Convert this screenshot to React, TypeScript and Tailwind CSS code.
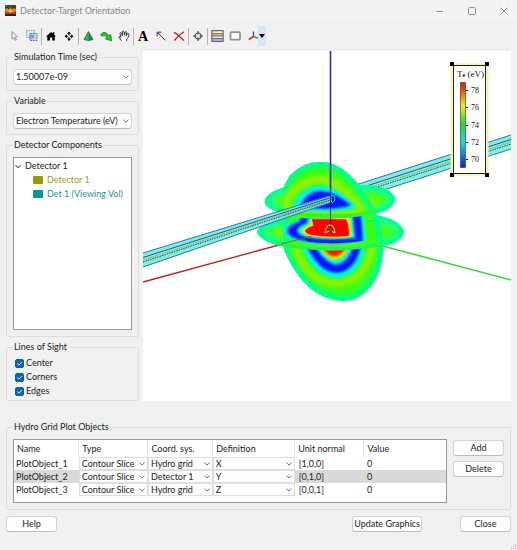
import React from 'react';

interface PlotObject {
  name: string;
  type: string;
  coord: string;
  definition: string;
  normal: string;
  value: string;
}

const plotObjects: PlotObject[] = [
  { name: 'PlotObject_1', type: 'Contour Slice', coord: 'Hydro grid', definition: 'X', normal: '[1,0,0]', value: '0' },
  { name: 'PlotObject_2', type: 'Contour Slice', coord: 'Detector 1', definition: 'Y', normal: '[0,1,0]', value: '0' },
  { name: 'PlotObject_3', type: 'Contour Slice', coord: 'Hydro grid', definition: 'Z', normal: '[0,0,1]', value: '0' },
];

function Chevron() {
  return (
    <svg className="pointer-events-none absolute top-1/2 right-[3px] h-1 w-[6px] -translate-y-1/2" viewBox="0 0 6 4" fill="none">
      <path d="M0.5 0.6 L3 3.1 L5.5 0.6" stroke="#606060" strokeWidth="0.9" />
    </svg>
  );
}

function Combo({ label, options }: { label: string; options: string[] }) {
  return (
    <div className="relative">
      <select
        aria-label={label}
        className="block h-4 w-full appearance-none rounded-sm border border-[#d4d4d4] border-b-[#bdbdbd] bg-[#fdfdfd] pr-3 pl-[2px] leading-3"
      >
        {options.map((option) => (
          <option key={option}>{option}</option>
        ))}
      </select>
      <Chevron />
    </div>
  );
}

function CellSelect({ label, value }: { label: string; value: string }) {
  return (
    <div className="relative">
      <select
        aria-label={label}
        defaultValue={value}
        className="block h-[13px] w-full appearance-none border border-[#dedede] bg-[#fdfdfd] pr-2 pl-[2px] leading-[11px]"
      >
        <option>{value}</option>
      </select>
      <Chevron />
    </div>
  );
}

function Group({ title, className = '', children }: { title: string; className?: string; children: React.ReactNode }) {
  return (
    <fieldset className={`min-w-0 rounded-[2px] border border-[#dcdcdc] px-[6px] ${className}`}>
      <legend className="h-3 px-px leading-3">{title}</legend>
      {children}
    </fieldset>
  );
}

function Check({ label }: { label: string }) {
  return (
    <label className="flex h-[14px] items-center gap-[2px]">
      <span className="relative flex">
        <input
          type="checkbox"
          defaultChecked
          className="peer h-[9px] w-[9px] appearance-none rounded-[2px] border border-[#0a5ca8] bg-white checked:bg-[#0f64b4]"
        />
        <svg className="pointer-events-none absolute inset-0 hidden h-[9px] w-[9px] peer-checked:block" viewBox="0 0 9 9" fill="none">
          <path d="M2.3 4.6 L3.9 6.1 L6.8 3.1" stroke="#fff" strokeWidth="0.9" />
        </svg>
      </span>
      {label}
    </label>
  );
}

function PushButton({ className, children }: { className: string; children: React.ReactNode }) {
  return (
    <button
      type="button"
      className={`h-4 rounded-[3px] border border-[#d2d2d2] border-b-[#bcbcbc] bg-[#fdfdfd] text-center leading-3 whitespace-nowrap ${className}`}
    >
      {children}
    </button>
  );
}

function Tool({ label, children }: { label: string; children: React.ReactNode }) {
  return (
    <button type="button" aria-label={label} className="flex h-5 w-[18px] shrink-0 items-center justify-center">
      <svg className="h-[14px] w-[14px]" viewBox="0 0 14 14" fill="none">
        {children}
      </svg>
    </button>
  );
}

function Separator() {
  return <div className="h-[17px] w-px shrink-0 bg-[#b4b4b4]" />;
}

function TitleBar() {
  return (
    <header className="flex h-[21px] items-center bg-[#f3f3f3] pl-[5px] text-[#858585]">
      <svg className="h-[11px] w-[11px]" viewBox="0 0 11 11">
        <rect width="11" height="11" fill="#1d2b2a" />
        <path d="M0 0 H11 V3 L9 2 L7 4 L5.5 2 L4 4 L2 2 L0 3 Z" fill="#3c4a2a" />
        <path d="M0 4 L2 3 L4 4.5 L5.5 2 L7 4.5 L9 3 L11 4 V8 H0 Z" fill="#e8811c" />
        <path d="M3.5 6 L5.5 3.5 L7.5 6 L7 8 H4 Z" fill="#f2d31c" />
        <path d="M0 6 L2 7.5 L4 7 L5.5 8.2 L7 7 L9 7.5 L11 6 V9 H0 Z" fill="#c42a12" />
        <path d="M0 0 H3 L1.5 2 L0 3 Z" fill="#1c7a72" />
      </svg>
      <h1 className="pl-1">Detector-Target Orientation</h1>
      <div className="ml-auto flex items-center gap-6 pr-[9px]">
        <button type="button" aria-label="Minimize" className="flex">
          <svg className="h-2 w-2" viewBox="0 0 8 8"><path d="M0.5 4.5 H7" stroke="#8c8c8c" /></svg>
        </button>
        <button type="button" aria-label="Maximize" className="flex">
          <svg className="h-2 w-2" viewBox="0 0 8 8"><rect x="0.5" y="0.5" width="7" height="7" rx="1" fill="none" stroke="#8c8c8c" /></svg>
        </button>
        <button type="button" aria-label="Close window" className="flex">
          <svg className="h-2 w-2" viewBox="0 0 8 8"><path d="M0.7 0.7 L7.3 7.3 M7.3 0.7 L0.7 7.3" stroke="#8c8c8c" /></svg>
        </button>
      </div>
    </header>
  );
}

function Toolbar() {
  return (
    <div className="flex h-[30px] items-center pl-[5px]">
      <Tool label="Select">
        <path d="M5 2.5 V10 L6.8 8.5 L8 11.3 L9.3 10.7 L8.1 8 L10.3 7.8 Z" fill="#f7f7f7" stroke="#777" strokeWidth="0.8" />
      </Tool>
      <Tool label="Rubber band">
        <rect x="1.5" y="1.5" width="8" height="7" fill="#dbe7f3" stroke="#8ba3bb" strokeDasharray="1.5 0.7" />
        <rect x="5" y="4.5" width="7" height="7" fill="#c7d9ec" stroke="#5f7f9f" strokeDasharray="2 0.7" />
        <path d="M4 5.5 H9 V9.5 H4 Z" fill="#7ca0c7" />
      </Tool>
      <Separator />
      <Tool label="Home">
        <path d="M2 7.5 L7 3 L8.8 4.6 V3.3 H10.3 V6 L12 7.5 H10.8 V11.5 H8.2 V8.5 H6 V11.5 H3.3 V7.5 Z" fill="#000" />
      </Tool>
      <Tool label="Pan">
        <path d="M7 3 V11.5 M3 7.2 H11" stroke="#111" strokeWidth="1.1" />
        <path d="M7 2.5 L5 5 H9 Z M7 12 L5 9.5 H9 Z M2.5 7.2 L5 5.2 V9.2 Z M11.5 7.2 L9 5.2 V9.2 Z" fill="#111" />
        <rect x="6.1" y="6.3" width="1.8" height="1.8" fill="#f0f0f0" />
      </Tool>
      <Separator />
      <Tool label="Cone">
        <path d="M7.5 2.5 L12 10.5 Q8 12.6 3 10.5 Z" fill="#238045" />
        <path d="M7.5 2.5 L7.8 11.6 Q5 11.8 3 10.5 Z" fill="#49a566" />
        <path d="M7.5 2.5 L12 10.5 Q8 12.6 3 10.5 Z" stroke="#1c5c34" strokeWidth="0.6" />
      </Tool>
      <Tool label="Rotate">
        <path d="M1.5 6 Q3.5 2.7 6.3 3.5 Q8.8 4.4 9.4 6.7 L11.8 5.6 L12.5 11.8 L6.5 10 L8 8.2 Q6 5.6 3.5 7.2 Z" fill="#27c52d" stroke="#147b1b" strokeWidth="0.8" />
      </Tool>
      <Tool label="Hand">
        <path d="M4.3 11.8 Q3.8 10.2 1.8 8 Q2.3 6.7 4.1 8.2 L2.9 4.2 Q3.6 3 4.5 4.3 L5.5 6.7 L5.3 2.7 Q6.3 1.4 7 2.8 L7.4 6.3 L8.2 2.9 Q9.2 2 9.7 3.3 L9.2 6.8 L10.7 4.6 Q11.9 4.1 12 5.4 Q11.4 8.9 9.6 10.4 V12" fill="#fff" stroke="#222" strokeWidth="0.9" />
      </Tool>
      <Separator />
      <button type="button" aria-label="Annotate text" className="flex h-5 w-[18px] items-center justify-center pt-px font-['Liberation_Serif',serif] text-[14px] leading-4 font-bold text-black">
        A
      </button>
      <Tool label="Annotate arrow">
        <path d="M3.7 3.7 L11.3 11.3 M3.2 7.3 V3.2 H7.3" stroke="#333" />
      </Tool>
      <Tool label="Remove annotation">
        <path d="M2 3.3 Q6 5.4 11.8 11.5 M12 2.8 Q7 5.5 2.5 11.5" stroke="#9c2630" strokeWidth="1.3" />
      </Tool>
      <Separator />
      <Tool label="Center">
        <circle cx="7" cy="7" r="3" stroke="#555" strokeWidth="1.2" />
        <path d="M7 2 V5.5 M7 8.5 V12 M2 7 H5.5 M8.5 7 H12" stroke="#444" strokeWidth="1.2" />
      </Tool>
      <Separator />
      <Tool label="Color legend">
        <rect x="2" y="1.8" width="11" height="10.4" fill="#fff" stroke="#222" />
        <rect x="2.5" y="2.5" width="10" height="2.2" fill="#f6eda6" />
        <rect x="2.5" y="5" width="10" height="2" fill="#f0b5b0" />
        <rect x="2.5" y="7.2" width="10" height="2.2" fill="#f7f3f9" />
        <rect x="2.5" y="9.5" width="10" height="2.2" fill="#9fb0e4" />
        <path d="M2 4.7 H13 M2 7 H13 M2 9.4 H13" stroke="#333" strokeWidth="0.7" />
      </Tool>
      <Tool label="Outline">
        <rect x="2.5" y="3.2" width="9.5" height="7.5" rx="1" fill="#fff" stroke="#929292" strokeWidth="1.8" />
      </Tool>
      <div className="flex">
        <Tool label="Axes">
          <path d="M7.5 7.5 V2.5" stroke="#2440e8" strokeWidth="1.3" />
          <path d="M7.5 7.5 L2.8 10.5" stroke="#e02a2a" strokeWidth="1.6" />
          <path d="M7.5 7.5 L12 9.3" stroke="#13b03c" strokeWidth="1.6" />
        </Tool>
        <button type="button" aria-label="Axes menu" className="-ml-1 flex h-5 w-2 items-center justify-center bg-[#d5e6f5]">
          <svg className="h-1 w-[6px]" viewBox="0 0 6 4"><path d="M0 0 H6 L3 4 Z" fill="#000" /></svg>
        </button>
      </div>
    </div>
  );
}

const DISC =
  'M130 112 L150 75 Q190 35 240 35 Q290 35 330 75 Q370 115 400 170 Q430 230 430 290 Q428 360 400 400 Q365 452 310 453 Q255 452 210 415 Q160 370 130 295 Z';
const UPPER_RING = 'M73 155 Q78 128 130 112 L370 104 Q458 108 466 147 Q462 180 405 192 Q345 206 290 206 Q180 206 110 185 Q75 172 73 155 Z';
const LOWER_RING = 'M50 245 Q58 222 120 208 L410 195 Q480 208 493 245 Q486 278 430 288 Q350 302 270 302 Q180 300 115 286 Q60 272 50 245 Z';

const legendTicks = [
  { label: '78', y: 90 },
  { label: '76', y: 107 },
  { label: '74', y: 125 },
  { label: '72', y: 142 },
  { label: '70', y: 159 },
];

// One viewing volume with its lines of sight, offset below the top edge
function Beam({ x1, y1, x2, y2, taper = 14 }: { x1: number; y1: number; x2: number; y2: number; taper?: number }) {
  const k = taper / 14;
  return (
    <g>
      <path d={`M${x1} ${y1} L${x2} ${y2} L${x2} ${y2 + taper} L${x1} ${y1 + 14} Z`} fill="#6cf0d4" fillOpacity="0.88" />
      <g strokeWidth="1">
        <path d={`M${x1} ${y1} L${x2} ${y2}`} stroke="#2f6fc0" />
        <path d={`M${x1} ${y1 + 4.5} L${x2} ${y2 + 4.5 * k}`} stroke="#1a5aa0" />
        <path d={`M${x1} ${y1 + 7} L${x2} ${y2 + 7 * k}`} stroke="#b8a890" />
        <path d={`M${x1} ${y1 + 9} L${x2} ${y2 + 9 * k}`} stroke="#1c4a50" strokeDasharray="1.5 1" />
        <path d={`M${x1} ${y1 + 14} L${x2} ${y2 + taper}`} stroke="#2f6fc0" />
      </g>
    </g>
  );
}

function Viewport() {
  return (
    <svg className="block h-full min-h-[350px] w-full bg-white" viewBox="143 51 368 350" role="img" aria-label="Detector and target scene">
      <defs>
        <clipPath id="disc"><path d={DISC} /></clipPath>
        <clipPath id="top"><rect x="0" y="0" width="540" height="206" /></clipPath>
        <clipPath id="mid"><path d="M0 200 L180 205 Q290 210 420 192 L540 180 V285 L430 288 Q290 306 130 290 L0 280 Z" /></clipPath>
        <clipPath id="low"><rect x="0" y="290" width="540" height="200" /></clipPath>
        <clipPath id="upperRing"><path d={UPPER_RING} /></clipPath>
        <clipPath id="lowerRing"><path d={LOWER_RING} /></clipPath>
        <filter id="soft" x="-20%" y="-20%" width="140%" height="140%"><feGaussianBlur stdDeviation="7" /></filter>
        <filter id="fine" x="-20%" y="-20%" width="140%" height="140%"><feGaussianBlur stdDeviation="2.5" /></filter>
        <linearGradient id="scale" x1="0" y1="0" x2="0" y2="1">
          <stop offset="0" stopColor="#d81c0c" />
          <stop offset="0.12" stopColor="#ff5a00" />
          <stop offset="0.27" stopColor="#f4ee10" />
          <stop offset="0.48" stopColor="#22e020" />
          <stop offset="0.7" stopColor="#18dce0" />
          <stop offset="0.88" stopColor="#1468ee" />
          <stop offset="1" stopColor="#1420c8" />
        </linearGradient>
      </defs>

      <path d="M143 282 L312 236" stroke="#c01c1c" strokeWidth="1.3" />
      <path d="M375 244 L511 280" stroke="#30d830" strokeWidth="1.5" />
      <Beam x1={340} y1={190} x2={511} y2={135} />

      <g transform="translate(240 150) scale(0.33333)">
        <g clipPath="url(#upperRing)">
          <path d={UPPER_RING} fill="#3cff14" stroke="#00ff96" strokeWidth="36" filter="url(#soft)" />
          <ellipse cx="270" cy="155" rx="150" ry="22" fill="#84f400" filter="url(#soft)" />
        </g>
        <g clipPath="url(#lowerRing)">
          <path d={LOWER_RING} fill="#3cff14" stroke="#00ff96" strokeWidth="36" filter="url(#soft)" />
          <ellipse cx="270" cy="247" rx="165" ry="24" fill="#84f400" filter="url(#soft)" />
        </g>

        <g clipPath="url(#disc)">
          <path d={DISC} fill="#38ff14" />
          <path d={DISC} fill="none" stroke="#00ff8c" strokeWidth="34" filter="url(#soft)" />
          <g clipPath="url(#top)">
            <path d="M130 160 Q170 95 240 88 Q300 95 360 175 L340 190 L150 180 Z" fill="none" stroke="#94f000" strokeWidth="24" filter="url(#soft)" />
            <path d="M160 165 Q182 110 240 107 Q298 112 352 173 Q270 195 162 180 Z" fill="#00f5e8" filter="url(#fine)" />
            <path d="M184 160 Q202 125 240 122 Q285 124 333 166 Q270 184 192 170 Z" fill="#0018ff" filter="url(#fine)" />
          </g>
          <g clipPath="url(#low)">
            <path d="M160 280 Q200 405 300 400 Q385 385 398 280" fill="none" stroke="#94f000" strokeWidth="20" filter="url(#soft)" />
            <path d="M184 285 Q220 382 292 384 Q364 376 378 285 Z" fill="#00f5e8" filter="url(#fine)" />
            <path d="M198 285 Q238 368 290 368 Q344 366 364 285 Z" fill="#0018ff" filter="url(#fine)" />
            <path d="M222 285 Q258 344 290 344 Q324 340 342 285 Z" fill="#00f5e8" filter="url(#fine)" />
            <path d="M232 285 Q260 331 285 331 Q318 328 330 285 Z" fill="#c8f000" filter="url(#fine)" />
            <path d="M244 285 Q262 319 284 319 Q308 317 320 285 Z" fill="#ff1800" filter="url(#fine)" />
          </g>
        </g>

        <g clipPath="url(#mid)">
          <path d="M128 240 Q135 222 170 212 L174 195 H372 L378 274 Q280 294 185 276 Q130 266 128 240 Z" fill="#00f5e8" filter="url(#fine)" />
          <path d="M140 240 Q148 223 180 215 L182 190 H362 L368 270 Q280 287 195 272 Q146 264 140 240 Z" fill="#0018ff" filter="url(#fine)" />
          <path d="M170 242 Q175 226 200 220 L206 190 H338 L346 264 Q270 272 210 263 Q175 258 170 242 Z" fill="#00f5e8" filter="url(#fine)" />
          <path d="M184 243 Q190 229 210 224 L214 190 H330 L336 260 Q270 267 215 259 Q188 256 184 243 Z" fill="#ffe400" filter="url(#fine)" />
          <path d="M195 243 Q200 232 220 228 L216 208 H318 Q327 225 327 257 Q270 264 222 256 Q200 254 195 243 Z" fill="#ff0000" />
          <path d="M200 271 Q280 284 368 270" fill="none" stroke="#101cc0" strokeWidth="5" />
        </g>

        {/* front edges of the two horizontal slices */}
        <g fill="none">
          <path d="M110 181 Q200 198 290 198 Q350 198 410 182" stroke="#2cf52a" strokeWidth="12" />
          <path d="M150 183 Q230 190 290 190 Q340 189 370 182" stroke="#8cf200" strokeWidth="5" filter="url(#fine)" />
          <path d="M110 280 Q200 296 275 296 Q350 295 428 283" stroke="#1ef54c" strokeWidth="12" />
          <path d="M170 285 Q280 294 380 283" stroke="#78f400" strokeWidth="5" filter="url(#fine)" />
        </g>
      </g>

      <Beam x1={143} y1={253} x2={332} y2={195} taper={7} />
      <path d="M331 195 L334 196 L335 200 L332 203" fill="none" stroke="#43cfe0" strokeWidth="1" />
      <path d="M281 244 L312 236" stroke="#7d6414" strokeWidth="0.9" />

      <path d="M330.5 51 V197" stroke="#2222b4" strokeWidth="1.5" />
      <path d="M330.5 197 V231" stroke="#202070" strokeWidth="0.8" />
      <path d="M325 233 Q326 225 330 225 Q334 225 335 233 M325 233 L329 231 M331 231 L335 233" fill="none" stroke="#e6e04a" strokeWidth="1.1" />
      <rect x="329" y="228" width="3" height="4" fill="#7b3a28" />

      <rect x="451.5" y="64.5" width="36" height="110" fill="#fff" stroke="#f3f0a4" strokeWidth="2" />
      <rect x="453.5" y="65.5" width="32" height="108" fill="#fff" stroke="#222" />
      <g fill="#000">
        <rect x="450" y="62" width="4" height="4" />
        <rect x="485" y="62" width="4" height="4" />
        <rect x="450" y="173" width="4" height="4" />
        <rect x="485" y="173" width="4" height="4" />
      </g>
      <g className="font-['Liberation_Serif',serif]" fill="#111">
        <text x="457" y="77" fontSize="9">T<tspan fontSize="6" fontWeight="bold">e</tspan> (eV)</text>
        {legendTicks.map((tick) => (
          <g key={tick.label}>
            <path d={`M466 ${tick.y + 0.5} h2`} stroke="#222" />
            <text x="471" y={tick.y + 3} fontSize="8">{tick.label}</text>
          </g>
        ))}
      </g>
      <rect x="460.5" y="82.5" width="5" height="85" fill="url(#scale)" stroke="#333" strokeWidth="0.6" />
    </svg>
  );
}

function SidePanel() {
  return (
    <aside className="flex w-[133px] shrink-0 flex-col gap-1">
      <Group title="Simulation Time (sec)" className="pt-[6px] pb-[5px]">
        <Combo label="Simulation Time (sec)" options={['1.50007e-09']} />
      </Group>
      <Group title="Variable" className="pt-[6px] pb-[5px]">
        <Combo label="Variable" options={['Electron Temperature (eV)']} />
      </Group>
      <Group title="Detector Components" className="grow pt-[6px] pb-[6px]">
        <ul className="h-full min-h-[171px] border border-[#999] bg-white pt-px leading-[14px]">
          <li>
            <div className="flex items-center gap-1 pl-px">
              <svg className="h-[5px] w-[6px]" viewBox="0 0 6 5" fill="none">
                <path d="M0.5 1 L3 3.8 L5.5 1" stroke="#222" />
              </svg>
              Detector 1
            </div>
            <ul className="pl-[19px]">
              <li className="flex items-center gap-1 text-[#a09a20]">
                <span className="h-2 w-[10px] rounded-[1px] bg-[#999900]" />
                Detector 1
              </li>
              <li className="flex items-center gap-1 text-[#1c9494]">
                <span className="h-2 w-[10px] rounded-[1px] bg-[#009999]" />
                Det 1 (Viewing Vol)
              </li>
            </ul>
          </li>
        </ul>
      </Group>
      <Group title="Lines of Sight" className="pt-[3px] pb-[2px]">
        <div className="pl-[2px]">
          <Check label="Center" />
          <Check label="Corners" />
          <Check label="Edges" />
        </div>
      </Group>
    </aside>
  );
}

function PlotTable() {
  const headings = ['Name', 'Type', 'Coord. sys.', 'Definition', 'Unit normal', 'Value'];
  return (
    <div className="h-16 min-w-0 grow border border-[#999] bg-white">
      <table className="w-full table-fixed border-collapse text-left">
        <colgroup>
          <col className="w-[15%]" />
          <col className="w-[16%]" />
          <col className="w-[15%]" />
          <col className="w-[19%]" />
          <col className="w-[16%]" />
          <col className="w-[19%]" />
        </colgroup>
        <thead>
          <tr className="h-[17px]">
            {headings.map((heading) => (
              <th key={heading} className="border-r border-[#e4e4e4] p-0 pl-[3px] font-normal last:border-r-0">
                {heading}
              </th>
            ))}
          </tr>
        </thead>
        <tbody>
          {plotObjects.map((row) => (
            <tr key={row.name} className={row.name === 'PlotObject_2' ? 'h-[13px] bg-[#d9d9d9]' : 'h-[13px]'}>
              <td className="p-0 pl-[2px] leading-3">{row.name}</td>
              <td className="p-0"><CellSelect label={`${row.name} type`} value={row.type} /></td>
              <td className="p-0"><CellSelect label={`${row.name} coordinate system`} value={row.coord} /></td>
              <td className="p-0"><CellSelect label={`${row.name} definition`} value={row.definition} /></td>
              <td className="p-0 pl-1 leading-3">{row.normal}</td>
              <td className="p-0 pl-[3px] leading-3">{row.value}</td>
            </tr>
          ))}
        </tbody>
      </table>
    </div>
  );
}

export default function App() {
  return (
    <div className="flex min-h-screen flex-col bg-[#f0f0f0] font-['Lato',sans-serif] text-[9px] leading-3 text-[#1c1c1c]">
      <TitleBar />
      <Toolbar />
      <main className="px-[6px]">
        <div className="flex gap-1">
          <SidePanel />
          <div className="min-w-0 grow">
            <Viewport />
          </div>
        </div>
        <Group title="Hydro Grid Plot Objects" className="mt-5 pt-[6px] pb-[6px]">
          <div className="flex gap-[6px]">
            <PlotTable />
            <div className="flex shrink-0 flex-col gap-[5px] pt-px">
              <PushButton className="w-[51px]">Add</PushButton>
              <PushButton className="w-[51px]">Delete</PushButton>
            </div>
          </div>
        </Group>
        <div className="mt-[6px] flex">
          <PushButton className="w-[51px]">Help</PushButton>
          <PushButton className="mr-[38px] ml-auto px-px">Update Graphics</PushButton>
          <PushButton className="w-[51px]">Close</PushButton>
        </div>
      </main>
      <svg className="mt-auto ml-auto h-[6px] w-[6px]" viewBox="0 0 6 6" fill="#b0b0b0">
        <path d="M4 0 h1 v1 h-1 z M2 2 h1 v1 h-1 z M4 2 h1 v1 h-1 z M0 4 h1 v1 h-1 z M2 4 h1 v1 h-1 z M4 4 h1 v1 h-1 z" />
      </svg>
    </div>
  );
}
